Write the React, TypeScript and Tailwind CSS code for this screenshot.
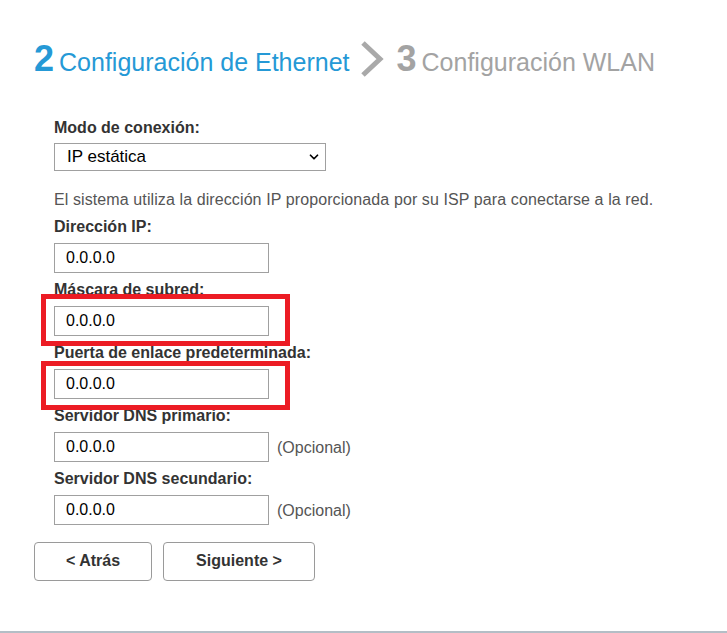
import { ChevronDown } from 'lucide-react'

const fields = [
  { label: 'Dirección IP:', optional: false, mark: null },
  { label: 'Máscara de subred:', optional: false, mark: 'top-[-12px] h-[52px]' },
  { label: 'Puerta de enlace predeterminada:', optional: false, mark: 'top-[-8px] h-[49px]' },
  { label: 'Servidor DNS primario:', optional: true, mark: null },
  { label: 'Servidor DNS secundario:', optional: true, mark: null },
]

const StepChevron = () => (
  <svg width="26" height="38" viewBox="0 0 26 38" className="ml-[9px] mr-[12px] self-center">
    <path d="M4 3 L21 19 L4 35" fill="none" stroke="#a9a9a9" strokeWidth="5" />
  </svg>
)

const App = () => {
  return (
    <div className="relative h-[633px] w-[727px] bg-white font-['Liberation_Sans',Arial,sans-serif]">
      <div className="flex items-baseline pl-[34px] pt-[37px]">
        <span className="text-[36px] font-bold leading-[44px] text-[#2599d6]">2</span>
        <span className="ml-[5px] text-[25px] text-[#2599d6]">Configuración de Ethernet</span>
        <StepChevron />
        <span className="text-[36px] font-bold leading-[44px] text-[#a3a3a3]">3</span>
        <span className="ml-[5px] text-[25px] text-[#a3a3a3]">Configuración WLAN</span>
      </div>

      <div className="pl-[54px] pt-[36px]">
        <div className="h-5 text-[16px] font-bold leading-5 text-[#333]">Modo de conexión:</div>
        <div className="relative mt-[5px] h-[28px] w-[272px]">
          <select
            defaultValue="static"
            className="h-full w-full appearance-none border border-[#a0a0a0] bg-white pl-[12px] text-[17px] text-black outline-none"
          >
            <option value="static">IP estática</option>
            <option value="dhcp">IP dinámica</option>
            <option value="pppoe">PPPoE</option>
          </select>
          <ChevronDown className="pointer-events-none absolute right-[5px] top-[7px] h-[14px] w-[14px] text-black" strokeWidth={3} />
        </div>

        <p className="mt-[19px] h-5 text-[16px] leading-5 tracking-[0.1px] text-[#555]">
          El sistema utiliza la dirección IP proporcionada por su ISP para conectarse a la red.
        </p>

        {fields.map((f) => (
          <div key={f.label} className="mt-[7px]">
            <div className="h-5 text-[16px] font-bold leading-5 text-[#333]">{f.label}</div>
            <div className="mt-[6px] flex items-center">
              <div className="relative">
                <input
                  defaultValue="0.0.0.0"
                  className="h-[30px] w-[215px] border border-[#a0a0a0] bg-white pl-[11px] text-[16px] text-black outline-none"
                />
                {f.mark && (
                  <div className={`pointer-events-none absolute left-[-13px] w-[249px] border-[5px] border-[#ec1c24] ${f.mark}`} />
                )}
              </div>
              {f.optional && <span className="ml-[8px] mt-[2px] text-[16px] text-[#555]">(Opcional)</span>}
            </div>
          </div>
        ))}
      </div>

      <div className="flex gap-[11px] pl-[34px] pt-[17px]">
        <button className="h-[39px] w-[118px] rounded-[4px] border border-[#9a9a9a] bg-white text-[16px] font-bold text-[#333]">
          &lt; Atrás
        </button>
        <button className="h-[39px] w-[152px] rounded-[4px] border border-[#9a9a9a] bg-white text-[16px] font-bold text-[#333]">
          Siguiente &gt;
        </button>
      </div>

      <div className="absolute bottom-0 left-0 h-[2px] w-full bg-[#b4bec6]" />
    </div>
  )
}

export default App
